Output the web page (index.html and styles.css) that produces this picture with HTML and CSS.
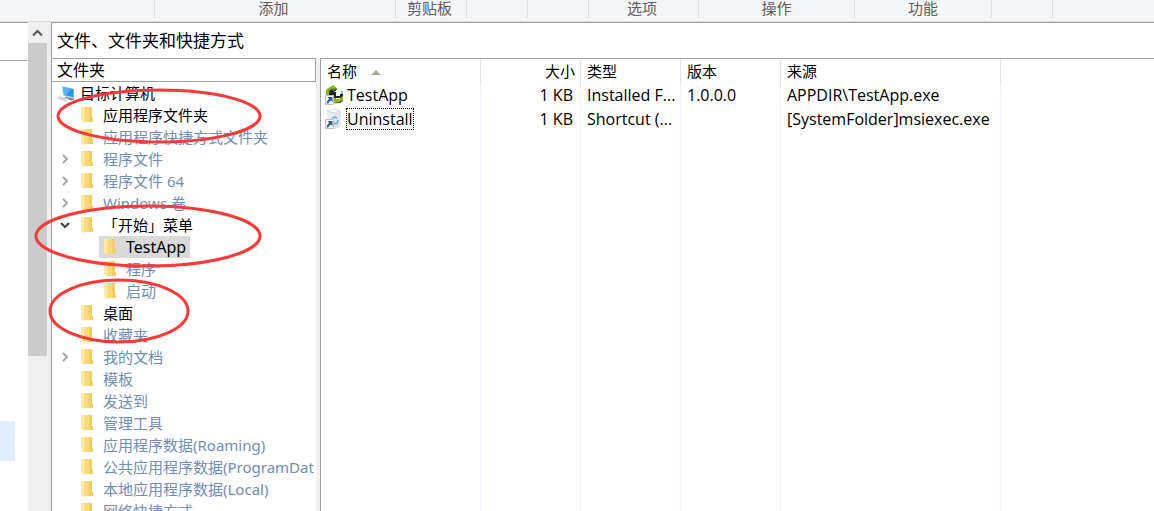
FILE: index.html
```
<!DOCTYPE html>
<html lang="zh-CN">
<head>
<meta charset="utf-8">
<title>文件、文件夹和快捷方式</title>
<link rel="stylesheet" href="styles.css">
</head>
<body>
<svg class="symbols" aria-hidden="true">
  <symbol id="folder" viewBox="0 0 12 16">
    <path d="M3 0h8v11h1v4H3z" fill="#f9d978"/>
    <path d="M8 0h3v11h1v4H8z" fill="#f3cc66"/>
    <path d="M0 0h3l1 2v13l-1 1-3-2z" fill="#ffe9a8"/>
    <path d="M3 1l1 1v13l-1 1z" fill="#fbdf8c"/>
  </symbol>
  <symbol id="right" viewBox="0 0 10 10"><path d="M3 1l4 4-4 4" fill="none" stroke="#a6a6a6" stroke-width="2"/></symbol>
  <symbol id="down" viewBox="0 0 10 10"><path d="M1 3l4 4 4-4" fill="none" stroke="#404040" stroke-width="2"/></symbol>
  <symbol id="shortcut" viewBox="0 0 9 10">
    <path d="M.5.5h8v9h-8z" fill="#fff" stroke="#b9bfc8"/>
    <path d="M2.500 2H7.500v5L6 5.500Q4 6.500 3.200 8.500H1.500Q1.800 5.500 4.200 3.700z" fill="#24579f"/>
  </symbol>
</svg>

<header class="ribbon">
  <span class="group g-start"></span>
  <span class="group g-add">添加</span>
  <span class="group g-clip">剪贴板</span>
  <span class="group g-small"></span>
  <span class="group g-small"></span>
  <span class="group g-options">选项</span>
  <span class="group g-actions">操作</span>
  <span class="group g-features">功能</span>
  <span class="group g-small"></span>
</header>

<div class="workspace">
  <nav class="side"><div class="side-head"></div><div class="side-active"></div></nav>
  <div class="scrollbar">
    <button class="scroll-up" aria-label="向上滚动"><svg width="11" height="8" viewBox="0 0 11 8"><path d="M1 6.500L5.500 2 10 6.500" fill="none" stroke="#555" stroke-width="2"/></svg></button>
    <div class="thumb"></div>
  </div>
  <main class="main">
    <h1 class="title">文件、文件夹和快捷方式</h1>
    <div class="panes">
      <section class="folders">
        <h2 class="folders-head">文件夹</h2>
        <ul class="tree">
          <li class="node root"><svg class="computer" viewBox="0 0 20 17">
            <path d="M6 1l12 2.500v10L7 10.500z" fill="#b9d4e6"/>
            <path d="M7 2l10.500 2.300v8L8 10z" fill="#2a95dd"/>
            <path d="M7 2l8 1.800L10 10.400 8 10z" fill="#55b4f0"/>
            <path d="M9 11.500l9 2v1.500l-3 .5-6-2z" fill="#7c8f9d"/>
            <path d="M0 13l4-2 9 3-3 3z" fill="#dde3e8"/>
            <path d="M2 13l8 2.500M4 12l7 2.300" stroke="#c2cbd2" fill="none"/>
          </svg>目标计算机</li>
          <li class="node on"><i class="twist"></i><span class="item"><svg class="folder"><use href="#folder"/></svg>应用程序文件夹</span></li>
          <li class="node"><i class="twist"></i><span class="item"><svg class="folder"><use href="#folder"/></svg>应用程序快捷方式文件夹</span></li>
          <li class="node"><button class="twist" aria-label="展开"><svg><use href="#right"/></svg></button><span class="item"><svg class="folder"><use href="#folder"/></svg>程序文件</span></li>
          <li class="node"><button class="twist" aria-label="展开"><svg><use href="#right"/></svg></button><span class="item"><svg class="folder"><use href="#folder"/></svg>程序文件 64</span></li>
          <li class="node"><button class="twist" aria-label="展开"><svg><use href="#right"/></svg></button><span class="item"><svg class="folder"><use href="#folder"/></svg>Windows 卷</span></li>
          <li class="node on"><button class="twist" aria-label="折叠"><svg><use href="#down"/></svg></button><span class="item"><svg class="folder"><use href="#folder"/></svg>「开始」菜单</span></li>
          <li class="node child on"><i class="twist"></i><span class="item selected"><svg class="folder"><use href="#folder"/></svg>TestApp</span></li>
          <li class="node child"><i class="twist"></i><span class="item"><svg class="folder"><use href="#folder"/></svg>程序</span></li>
          <li class="node child"><i class="twist"></i><span class="item"><svg class="folder"><use href="#folder"/></svg>启动</span></li>
          <li class="node on"><i class="twist"></i><span class="item"><svg class="folder"><use href="#folder"/></svg>桌面</span></li>
          <li class="node"><i class="twist"></i><span class="item"><svg class="folder"><use href="#folder"/></svg>收藏夹</span></li>
          <li class="node"><button class="twist" aria-label="展开"><svg><use href="#right"/></svg></button><span class="item"><svg class="folder"><use href="#folder"/></svg>我的文档</span></li>
          <li class="node"><i class="twist"></i><span class="item"><svg class="folder"><use href="#folder"/></svg>模板</span></li>
          <li class="node"><i class="twist"></i><span class="item"><svg class="folder"><use href="#folder"/></svg>发送到</span></li>
          <li class="node"><i class="twist"></i><span class="item"><svg class="folder"><use href="#folder"/></svg>管理工具</span></li>
          <li class="node"><i class="twist"></i><span class="item"><svg class="folder"><use href="#folder"/></svg>应用程序数据(Roaming)</span></li>
          <li class="node"><i class="twist"></i><span class="item"><svg class="folder"><use href="#folder"/></svg>公共应用程序数据(ProgramDat</span></li>
          <li class="node"><i class="twist"></i><span class="item"><svg class="folder"><use href="#folder"/></svg>本地应用程序数据(Local)</span></li>
          <li class="node"><i class="twist"></i><span class="item"><svg class="folder"><use href="#folder"/></svg>网络快捷方式</span></li>
        </ul>
      </section>
      <div class="splitter"></div>
      <section class="files">
        <table class="list">
          <colgroup><col class="c-name"><col class="c-mid"><col class="c-mid"><col class="c-mid"><col class="c-source"><col></colgroup>
          <thead>
            <tr><th>名称<svg class="sort" viewBox="0 0 10 5"><path d="M0 5l5-5 5 5z" fill="#aaa89b"/></svg></th><th class="size">大小</th><th>类型</th><th>版本</th><th>来源</th><th></th></tr>
          </thead>
          <tbody>
            <tr>
              <td class="name"><span class="file"><svg class="file-icon" viewBox="0 0 20 20">
                <path d="M1 10V6q1-3 4-4l3-2 5 4-3 1v5z" fill="#8fb31c"/>
                <path d="M4 10V7q1-3 4-3h3v2H9v4z" fill="#23281a"/>
                <path d="M7 4l4-1 1 2-4 1z" fill="#5f7a17"/>
                <path d="M9 7h2v4h4V9h3v7q-3 3-9 2z" fill="#23281a"/>
                <path d="M9 13h6l3-2v4q-3 3-9 3z" fill="#93b51e"/>
                <path d="M11 13h4v1h-4z" fill="#fff"/>
                <path d="M16 6h2v3h-2z" fill="#63d9bd"/>
                <use href="#shortcut" x="0" y="10" width="9" height="10"/>
              </svg><span class="label">TestApp</span></span></td>
              <td class="size">1 KB</td><td>Installed F...</td><td>1.0.0.0</td><td>APPDIR\TestApp.exe</td><td></td>
            </tr>
            <tr>
              <td class="name"><span class="file"><svg class="file-icon" viewBox="0 0 20 20">
                <path d="M2 2l8-2 6 2-1 16-6 2-6-2z" fill="#e9edf1"/>
                <path d="M2 2l8-2 6 2-7 2z" fill="#f8fafb" stroke="#d5dbe1"/>
                <path d="M9 4l7-2-1 16-6 2z" fill="#dee4ea"/>
                <path d="M7 9.500q3-3 5 0M13 11l-1 3.500H9M8 14l-1-3" fill="none" stroke="#6ba6df" stroke-width="1.500"/>
                <use href="#shortcut" x="0" y="10" width="9" height="10"/>
              </svg><span class="label focused">Uninstall</span></span></td>
              <td class="size">1 KB</td><td>Shortcut (...</td><td></td><td>[SystemFolder]msiexec.exe</td><td></td>
            </tr>
            <tr class="rest"><td></td><td></td><td></td><td></td><td></td><td></td></tr>
          </tbody>
        </table>
      </section>
    </div>
  </main>
</div>

<svg class="marks" width="270" height="350" fill="none" stroke="#fb3939" stroke-width="3" aria-hidden="true">
  <ellipse cx="159" cy="116" rx="101" ry="26"/>
  <ellipse cx="148" cy="236" rx="112" ry="30"/>
  <ellipse cx="119" cy="311" rx="69" ry="31"/>
</svg>
</body>
</html>
```
FILE: styles.css
```
* { box-sizing: border-box; }

body {
  margin: 0;
  height: 100vh;
  overflow: hidden;
  display: flex;
  flex-direction: column;
  background: #fff;
  color: #000;
  font: 15px/22px "Noto Sans", "Noto Sans CJK SC", sans-serif;
}

button { border: 0; padding: 0; background: none; }
h1, h2 { margin: 0; font-weight: normal; }
svg { flex: none; display: block; }
.symbols { position: absolute; width: 0; height: 0; }

.ribbon {
  flex: none;
  display: flex;
  height: 22px;
  background: #f4f5f7;
  border-bottom: 1px solid #dadbdc;
  color: #5c5c5c;
  line-height: 16px;
}
.group { height: 18px; border-right: 1px solid #dfe0e2; text-align: center; padding-right: 3px; white-space: nowrap; }
.g-start { width: 155px; }
.g-add { width: 241px; }
.g-clip { width: 71px; }
.g-small { width: 61px; }
.g-options { width: 110px; }
.g-actions { width: 156px; padding-right: 0; }
.g-features { width: 137px; padding-right: 0; }

.workspace { flex: 1; min-height: 0; display: flex; }

.side { width: 28px; flex: none; border-top: 1px solid #a0a0a0; padding-right: 1px; }
.side-head { height: 38px; border-bottom: 1px solid #a0a0a0; }
.side-active { width: 15px; height: 40px; margin-top: 360px; background: #e0edff; }

.scrollbar { width: 23px; flex: none; background: #efefef; padding-right: 4px; }
.scroll-up { display: grid; place-items: center; width: 100%; height: 21px; }
.thumb { height: 313px; background: #cbcbcb; }

.main {
  flex: 1;
  min-width: 0;
  display: flex;
  flex-direction: column;
  border: solid #a0a0a0;
  border-width: 1px 0 0 1px;
}
.title { flex: none; height: 35px; padding-left: 5px; font-size: 17px; line-height: 35px; }
.panes { flex: 1; min-height: 0; display: flex; }

.folders { width: 264px; flex: none; overflow: hidden; }
.folders-head { height: 24px; border: 1px solid #a0a0a0; border-left: 0; padding-left: 5px; font-size: 16px; line-height: 22px; }
.tree { margin: 0; padding: 0; list-style: none; color: #6f8db9; }
.node { display: flex; align-items: center; height: 22px; white-space: nowrap; }
.root { padding-left: 4px; gap: 4px; color: #000; }
.on { color: #000; }
.child { padding-left: 23px; }
.twist { width: 24px; height: 22px; display: grid; place-items: center; flex: none; padding-left: 1px; }
.twist svg { width: 10px; height: 10px; }
.item { display: flex; align-items: center; gap: 10px; height: 22px; padding: 0 4px 0 5px; }
.selected { background: #d9d9d9; font-size: 16px; }
.folder { width: 12px; height: 16px; }
.computer { width: 20px; height: 17px; }

.splitter { width: 4px; flex: none; background: #f0f0f0; }

.files { flex: 1; min-width: 0; border: solid #a0a0a0; border-width: 1px 0 0 1px; }
.list { width: 100%; height: 100%; table-layout: fixed; border-collapse: separate; border-spacing: 0; }
.c-name { width: 160px; }
.c-mid { width: 100px; }
.c-source { width: 220px; }
th, td { height: 24px; padding: 0 6px; border-right: 1px solid #e8f1fc; font-weight: normal; text-align: left; white-space: nowrap; line-height: 22px; }
th { border-color: #e2e2e2; }
td { font-family: "Open Sans", "Noto Sans CJK SC", sans-serif; font-size: 16px; }
th:last-child, td:last-child { border-right: 0; }
.size { text-align: right; padding-right: 5px; }
td.size { text-align: right; padding-right: 7px; }
th.size { text-align: right; padding-right: 5px; }
.sort { display: inline-block; width: 10px; height: 5px; margin-left: 14px; vertical-align: middle; }
.name { padding-left: 4px; }
.file { display: flex; align-items: center; gap: 1px; }
.file-icon { width: 20px; height: 20px; }
.label { line-height: 20px; border: 1px solid transparent; }
.focused { border: 1px dotted #000; }
.rest td { height: auto; }

.marks { position: absolute; left: 0; top: 0; pointer-events: none; }
```
